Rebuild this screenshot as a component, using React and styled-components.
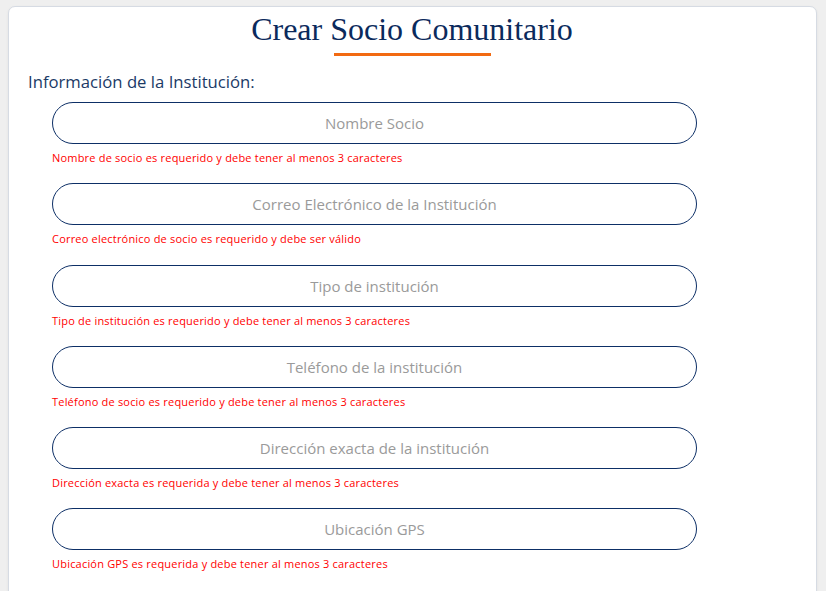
import React from "react";
import styled, { createGlobalStyle } from "styled-components";

const Global = createGlobalStyle`
  html, body { margin: 0; padding: 0; background: #efefef; }
  body { padding: 6px 9px 0 8px; font-family: "Open Sans", "Lato", sans-serif; }
  * { box-sizing: border-box; }
`;

const Card = styled.div`
  background: #ffffff;
  border: 1px solid #d6dbe3;
  border-radius: 7px;
  box-shadow: 0 1px 3px rgba(0, 0, 0, 0.06);
  padding: 2px 20px 40px 19px;
  min-height: 620px;
`;

const Title = styled.h1`
  margin: 0;
  text-align: center;
  font-family: "Liberation Serif", "DejaVu Serif", serif;
  font-weight: 400;
  font-size: 32px;
  line-height: 40px;
  color: #0b2a5c;
`;

const Underline = styled.div`
  width: 157px;
  height: 3px;
  background: #f26a12;
  margin: 4px auto 0;
`;

const SectionLabel = styled.h2`
  margin: 15px 0 0;
  font-family: "Open Sans", sans-serif;
  font-weight: 400;
  font-size: 16.7px;
  line-height: 22px;
  color: #1b3a66;
`;

const Fields = styled.div`
  display: flex;
  flex-direction: column;
  gap: 18.25px;
  padding-left: 24px;
  margin-top: 9px;
`;

const Field = styled.div`
  display: flex;
  flex-direction: column;
`;

const Input = styled.input`
  width: 645px;
  height: 42px;
  border: 1px solid #0d2f66;
  border-radius: 21px;
  background: #fff;
  text-align: center;
  font-family: "Open Sans", sans-serif;
  font-size: 15px;
  color: #333;
  outline: none;
  &::placeholder { color: #9a9a9a; }
`;

const Error = styled.div`
  margin-top: 6px;
  font-family: "Open Sans", sans-serif;
  font-size: 11px;
  letter-spacing: 0.2px;
  line-height: 15px;
  color: #ff0000;
`;

const fields = [
  ["Nombre Socio", "Nombre de socio es requerido y debe tener al menos 3 caracteres"],
  ["Correo Electrónico de la Institución", "Correo electrónico de socio es requerido y debe ser válido"],
  ["Tipo de institución", "Tipo de institución es requerido y debe tener al menos 3 caracteres"],
  ["Teléfono de la institución", "Teléfono de socio es requerido y debe tener al menos 3 caracteres"],
  ["Dirección exacta de la institución", "Dirección exacta es requerida y debe tener al menos 3 caracteres"],
  ["Ubicación GPS", "Ubicación GPS es requerida y debe tener al menos 3 caracteres"],
];

export default function App() {
  return (
    <>
      <Global />
      <Card>
        <Title>Crear Socio Comunitario</Title>
        <Underline />
        <SectionLabel>Información de la Institución:</SectionLabel>
        <Fields>
          {fields.map(([ph, err]) => (
            <Field key={ph}>
              <Input placeholder={ph} />
              <Error>{err}</Error>
            </Field>
          ))}
        </Fields>
      </Card>
    </>
  );
}
